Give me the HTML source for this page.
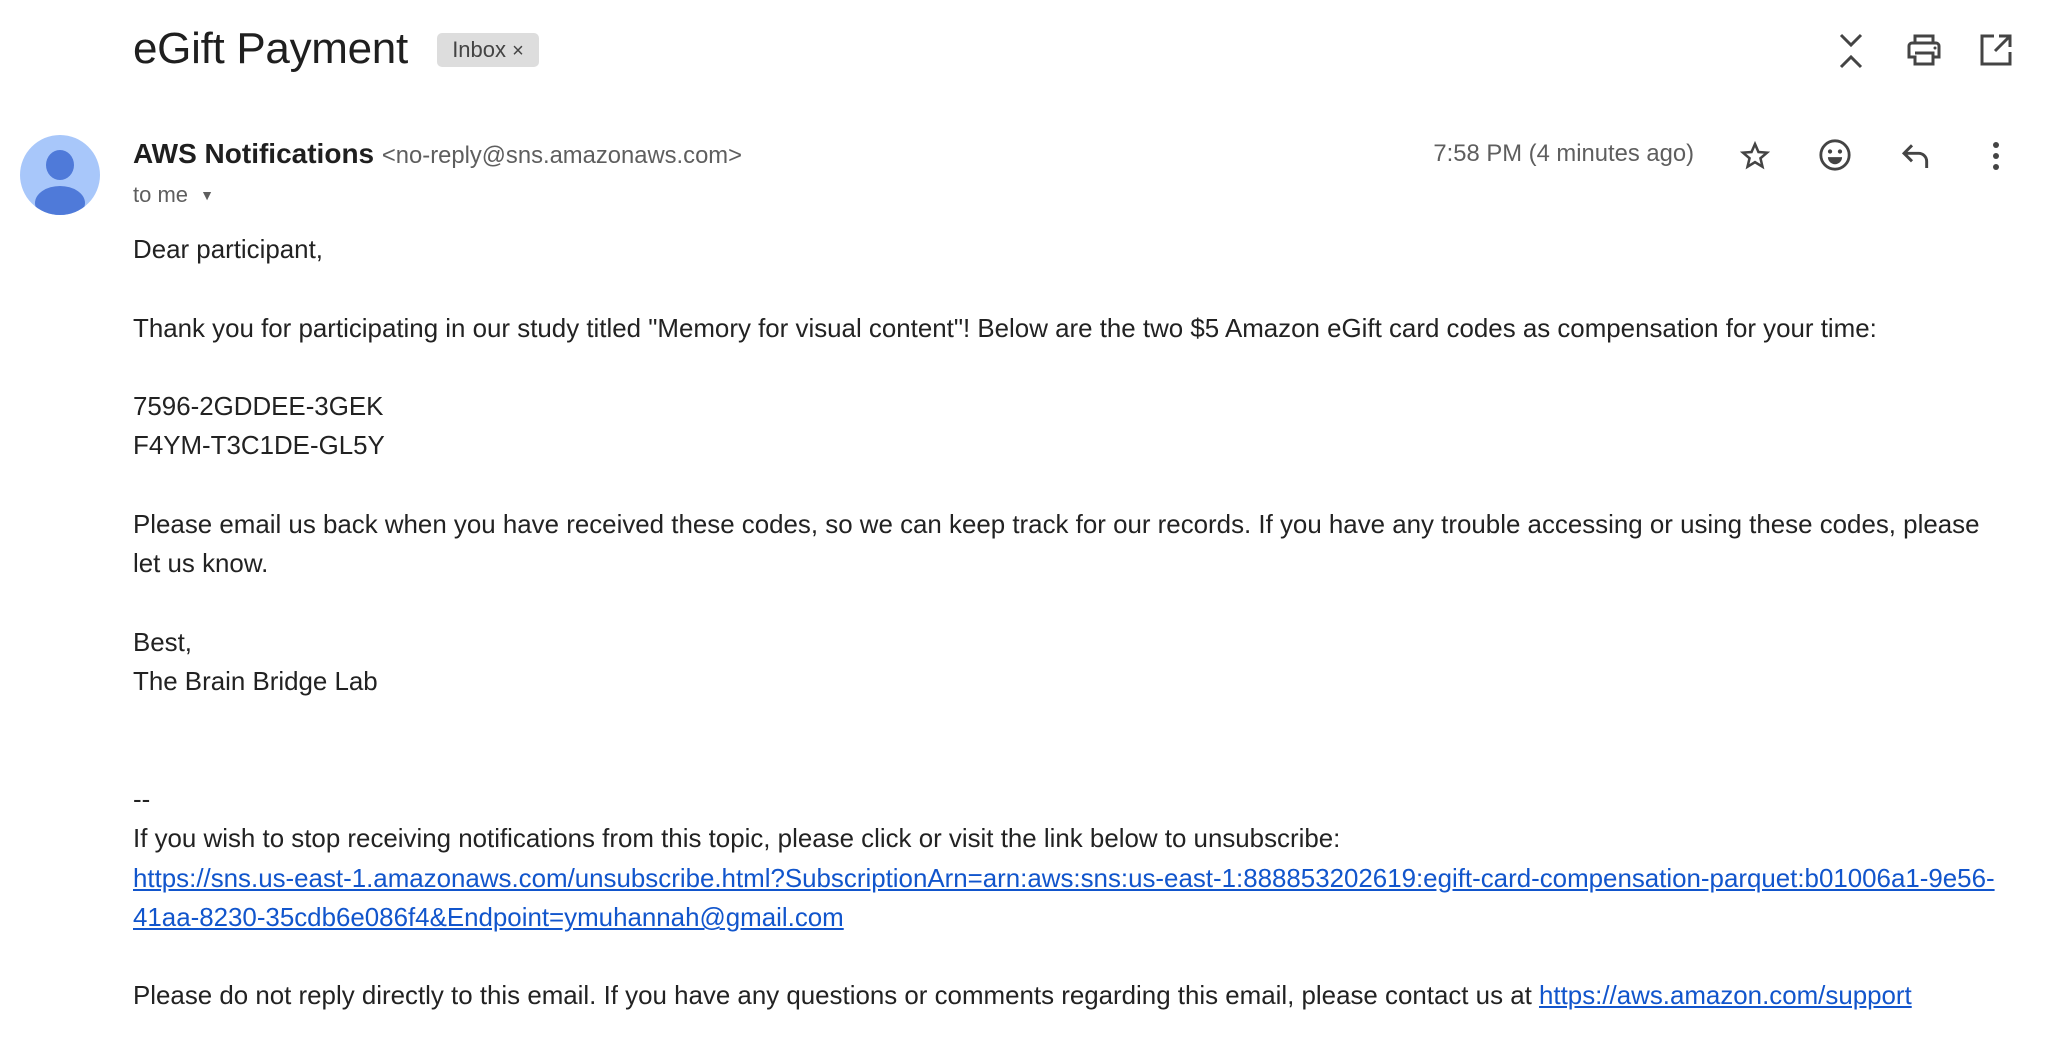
<!DOCTYPE html>
<html><head><meta charset="utf-8"><style>
body{margin:0;width:2050px;height:1050px;background:#fff;font-family:"Liberation Sans",Arial,sans-serif;color:#222;position:relative;overflow:hidden}
.a{position:absolute;white-space:nowrap}
.t{font-size:25.9px;line-height:39.4px;color:#222}
a{color:#1155cc;text-decoration:underline}
svg{position:absolute}
</style></head><body>
<div class="a" style="left:133px;top:24px;font-size:44px;color:#1f1f1f;letter-spacing:-0.3px">eGift Payment</div>
<div class="a" style="left:437px;top:33px;width:102px;height:34px;background:#ddd;border-radius:5px;font-size:22px;line-height:34px;color:#444;text-align:center">Inbox <span style="font-size:20px">×</span></div>

<svg style="left:1836px;top:32px" width="30" height="38" viewBox="0 0 30 38"><path d="M5 3l10 10 10-10M5 35l10-10 10 10" stroke="#444" stroke-width="3" fill="none"/></svg>
<svg style="left:1906px;top:33px" width="36" height="34" viewBox="0 0 36 34"><path d="M9 10V3h18v7M6 10h24a3 3 0 0 1 3 3v11h-6v7H9v-7H3V13a3 3 0 0 1 3-3zM9 20h18v11" stroke="#444" stroke-width="3" fill="none"/><circle cx="29" cy="15" r="1.5" fill="#444"/></svg>
<svg style="left:1980px;top:34px" width="32" height="32" viewBox="0 0 32 32"><path d="M14 2H2v28h28V18M19 2h11v11M30 2L15 17" stroke="#444" stroke-width="3" fill="none"/></svg>

<svg style="left:20px;top:135px" width="80" height="80" viewBox="0 0 80 80"><defs><clipPath id="c"><circle cx="40" cy="40" r="40"/></clipPath></defs><circle cx="40" cy="40" r="40" fill="#a8c7fa"/><g clip-path="url(#c)"><ellipse cx="40" cy="30" rx="14" ry="15" fill="#4f7ad9"/><ellipse cx="40" cy="68" rx="25" ry="17" fill="#4f7ad9"/></g></svg>

<div class="a" style="left:133px;top:138px;font-size:28px;font-weight:bold;color:#1f1f1f">AWS Notifications <span style="font-weight:normal;font-size:23.8px;color:#5e5e5e">&lt;no-reply@sns.amazonaws.com&gt;</span></div>
<div class="a" style="left:133px;top:182px;font-size:22px;color:#5e5e5e">to me <span style="font-size:14px;position:relative;top:-2px;margin-left:6px">▼</span></div>
<div class="a" style="right:356px;top:140px;font-size:23.8px;color:#5e5e5e">7:58 PM (4 minutes ago)</div>

<svg style="left:1739px;top:140px" width="32" height="32" viewBox="0 0 24 24"><path d="M12 3l2.6 6 6.4.5-4.9 4.2 1.5 6.3L12 16.6 6.4 20l1.5-6.3L3 9.5 9.4 9z" stroke="#444" stroke-width="1.9" fill="none"/></svg>
<svg style="left:1818px;top:138px" width="34" height="34" viewBox="0 0 24 24"><circle cx="12" cy="12" r="10" stroke="#444" stroke-width="2" fill="none"/><circle cx="8.5" cy="9.5" r="1.5" fill="#444"/><circle cx="15.5" cy="9.5" r="1.5" fill="#444"/><path d="M7 13.5h10a5 5 0 0 1-10 0z" fill="#444"/></svg>
<svg style="left:1900px;top:141px" width="32" height="30" viewBox="0 0 24 22"><path d="M9 3L3 9l6 6M3 9h11a6 6 0 0 1 6 6v5" stroke="#444" stroke-width="2.2" fill="none"/></svg>
<svg style="left:1990px;top:140px" width="12" height="32" viewBox="0 0 12 32"><circle cx="6" cy="5" r="3" fill="#444"/><circle cx="6" cy="16" r="3" fill="#444"/><circle cx="6" cy="27" r="3" fill="#444"/></svg>

<div class="a t" style="left:133px;top:231px">Dear participant,</div>
<div class="a t" style="left:133px;top:310px">Thank you for participating in our study titled "Memory for visual content"! Below are the two $5 Amazon eGift card codes as compensation for your time:</div>
<div class="a t" style="left:133px;top:388px">7596-2GDDEE-3GEK<br>F4YM-T3C1DE-GL5Y</div>
<div class="a t" style="left:133px;top:506px">Please email us back when you have received these codes, so we can keep track for our records. If you have any trouble accessing or using these codes, please<br>let us know.</div>
<div class="a t" style="left:133px;top:624px">Best,<br>The Brain Bridge Lab</div>
<div class="a t" style="left:133px;top:781px">--<br>If you wish to stop receiving notifications from this topic, please click or visit the link below to unsubscribe:<br><a>https://sns.us-east-1.amazonaws.com/unsubscribe.html?SubscriptionArn=arn:aws:sns:us-east-1:888853202619:egift-card-compensation-parquet:b01006a1-9e56-</a><br><a>41aa-8230-35cdb6e086f4&amp;Endpoint=ymuhannah@gmail.com</a></div>
<div class="a t" style="left:133px;top:977px">Please do not reply directly to this email. If you have any questions or comments regarding this email, please contact us at <a>https://aws.amazon.com/support</a></div>
</body></html>
